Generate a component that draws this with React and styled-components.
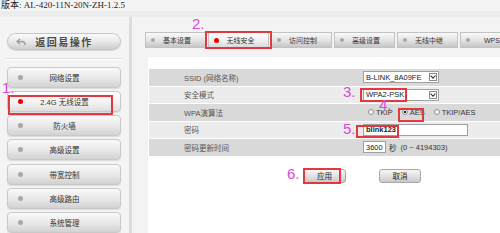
import React from 'react';
import styled, { createGlobalStyle, css } from 'styled-components';

const GlobalStyle = createGlobalStyle`
  html, body { margin: 0; padding: 0; background: #f0f0f0; }
  body { font-family: "Liberation Sans", "Noto Sans CJK SC", sans-serif; }
`;

const cjk = `"Liberation Sans", "Noto Sans CJK SC", sans-serif`;

const Page = styled.div`
  position: relative;
  width: 500px;
  height: 233px;
  overflow: hidden;
  background: #ececec;
  display: flex;
  flex-direction: column;
`;

const Header = styled.div`
  height: 11px;
  padding-left: 1px;
  background: #f4f4f4;
  font-family: "Liberation Serif", "Noto Sans CJK SC", serif;
  font-size: 9px;
  line-height: 11px;
  color: #222;
  white-space: nowrap;
`;

const Main = styled.div`
  margin-top: 6px;
  flex: 1;
  display: flex;
  min-height: 0;
`;

const Sidebar = styled.div`
  width: 122px;
  padding: 16px 0 0 7px;
  background: #f4f4f4;
  border-right: 3px solid #dcdcdc;
  display: flex;
  flex-direction: column;
`;

const BackButton = styled.div`
  width: 114px;
  height: 20px;
  box-sizing: border-box;
  border: 1px solid #c4c4c4;
  border-radius: 10px;
  background: linear-gradient(#fbfbfb, #e6e6e6 55%, #cdcdcd);
  display: flex;
  align-items: center;
  padding-left: 8px;
  box-shadow: 0 1px 1px rgba(0, 0, 0, 0.12);
`;

const BackLabel = styled.span`
  flex: 1;
  text-align: center;
  padding-right: 18px;
  font-family: ${cjk};
  font-size: 10px;
  font-weight: bold;
  letter-spacing: 1.5px;
  color: #4a4a4a;
`;

const Divider = styled.div`
  height: 1px;
  width: 116px;
  margin: 8px 0 7px -1px;
  background: #e0e0e0;
  border-bottom: 1px solid #fff;
`;

const Menu = styled.div`
  display: flex;
  flex-direction: column;
  gap: 3.2px;
`;

const MenuItem = styled.div`
  width: 114px;
  height: 21px;
  box-sizing: border-box;
  border: 1px solid #c9c9c9;
  border-radius: 4px;
  background: ${({ $active }) =>
    $active
      ? 'linear-gradient(#ffffff, #f1f1f1 60%, #dedede)'
      : 'linear-gradient(#fafafa, #e7e7e7 55%, #d2d2d2)'};
  display: flex;
  align-items: center;
  padding-left: 10px;
  box-shadow: 0 1px 1px rgba(0, 0, 0, 0.1);
`;

const Dot = styled.span`
  width: ${({ $size }) => $size || 5}px;
  height: ${({ $size }) => $size || 5}px;
  border-radius: 50%;
  flex-shrink: 0;
  background: ${({ $active }) => ($active ? '#f00000' : '#a8a8a8')};
`;

const ItemLabel = styled.span`
  flex: 1;
  text-align: center;
  padding-right: 14px;
  font-family: ${cjk};
  font-size: 7.5px;
  color: #333;
  white-space: nowrap;
`;

const Content = styled.div`
  flex: 1;
  display: flex;
  flex-direction: column;
  padding: 15px 0 0 13px;
  background: #f3f3f3;
  min-width: 0;
`;

const Tabs = styled.div`
  display: flex;
  gap: 2px;
  height: 16px;
`;

const Tab = styled.div`
  width: 61px;
  flex-shrink: 0;
  height: 16px;
  box-sizing: border-box;
  border: 1px solid #c2c2c2;
  background: ${({ $active }) =>
    $active
      ? 'linear-gradient(#ffffff, #eeeeee 60%, #d9d9d9)'
      : 'linear-gradient(#f9f9f9, #e2e2e2 55%, #c6c6c6)'};
  display: flex;
  align-items: center;
  padding-left: 5px;
`;

const TabLabel = styled.span`
  flex: 1;
  text-align: center;
  padding-right: 6px;
  font-family: ${cjk};
  font-size: 7px;
  color: #333;
  white-space: nowrap;
`;

const Panel = styled.div`
  flex: 1;
  margin: 9px 0 0 3px;
  padding: 12px 0 0 1px;
  background: #fff;
  display: flex;
  flex-direction: column;
`;

const Form = styled.div`
  display: flex;
  flex-direction: column;
`;

const Row = styled.div`
  height: 16.5px;
  border-bottom: 1px solid #fff;
  display: grid;
  grid-template-columns: 214px 1fr;
  align-items: center;
  background: ${({ $shade }) => ($shade ? '#d9d9d9' : '#ececec')};
`;

const Label = styled.div`
  padding-left: 35px;
  font-family: ${cjk};
  font-size: 7.5px;
  color: #555;
  white-space: nowrap;
`;

const Value = styled.div`
  display: flex;
  align-items: center;
  font-family: ${cjk};
  font-size: 7.5px;
  color: #333;
  white-space: nowrap;
`;

const field = css`
  height: 12px;
  box-sizing: border-box;
  border: 1px solid #a0a0a0;
  background: #fff;
  display: flex;
  align-items: center;
  padding-left: 2px;
  font-size: 7.5px;
  color: #222;
`;

const Select = styled.div`
  ${field}
  width: 76px;
  justify-content: space-between;
  padding-right: 1px;
`;

const Arrow = styled.span`
  width: 8px;
  height: 8px;
  box-sizing: border-box;
  border: 1px solid #8a8a8a;
  display: flex;
  align-items: center;
  justify-content: center;
`;

const Input = styled.div`
  ${field}
  width: ${({ $w }) => $w}px;
  font-weight: ${({ $bold }) => ($bold ? 'bold' : 'normal')};
`;

const Radio = styled.span`
  width: 6px;
  height: 6px;
  box-sizing: border-box;
  border-radius: 50%;
  border: 1px solid #8c8c8c;
  background: ${({ $on }) => ($on ? 'radial-gradient(#111 45%, #fff 55%)' : '#fff')};
  margin: 0 2px 0 ${({ $gap }) => $gap || 0}px;
`;

const Unit = styled.span`
  margin-left: ${({ $gap }) => $gap}px;
`;

const Actions = styled.div`
  display: flex;
  margin: 12px 0 0 154px;
  gap: 33px;
`;

const Button = styled.div`
  width: ${({ $w }) => $w}px;
  height: 14px;
  box-sizing: border-box;
  border: 1px solid #a8a8a8;
  border-radius: 3px;
  background: linear-gradient(#f7f7f7, #e0e0e0 55%, #c9c9c9);
  display: flex;
  align-items: center;
  justify-content: center;
  font-family: ${cjk};
  font-size: 7.5px;
  color: #222;
`;

const Note = styled.span`
  position: absolute;
  left: ${({ $x }) => $x}px;
  top: ${({ $y }) => $y}px;
  font-family: "Liberation Sans", sans-serif;
  font-size: 15px;
  line-height: 1;
  color: #d94ad9;
`;

const Mark = styled.span`
  position: absolute;
  left: ${({ $x }) => $x}px;
  top: ${({ $y }) => $y}px;
  width: ${({ $w }) => $w}px;
  height: ${({ $h }) => $h}px;
  box-sizing: border-box;
  border: 2px solid #e0393f;
  pointer-events: none;
`;

const BackIcon = () => (
  <svg width="10" height="8" viewBox="0 0 10 8" fill="none">
    <path d="M4 1 L1 3.5 L4 6" stroke="#9a9a9a" strokeWidth="1.4" strokeLinejoin="round" />
    <path d="M1.5 3.5 H6 Q9 3.5 9 7" stroke="#9a9a9a" strokeWidth="1.4" fill="none" />
  </svg>
);

const Chevron = () => (
  <svg width="6" height="4" viewBox="0 0 6 4">
    <path d="M0.5 0.5 L3 3.2 L5.5 0.5" stroke="#333" strokeWidth="1.1" fill="none" />
  </svg>
);

const menu = ['网络设置', '2.4G 无线设置', '防火墙', '高级设置', '带宽控制', '高级路由', '系统管理'];
const tabs = ['基本设置', '无线安全', '访问控制', '高级设置', '无线中继', 'WPS'];

export default function App() {
  return (
    <Page>
      <GlobalStyle />
      <Header>版本: AL-420-11N-20N-ZH-1.2.5</Header>
      <Main>
        <Sidebar>
          <BackButton>
            <BackIcon />
            <BackLabel>返回易操作</BackLabel>
          </BackButton>
          <Divider />
          <Menu>
            {menu.map((m, i) => (
              <MenuItem key={m} $active={i === 1}>
                <Dot $active={i === 1} />
                <ItemLabel>{m}</ItemLabel>
              </MenuItem>
            ))}
          </Menu>
        </Sidebar>
        <Content>
          <Tabs>
            {tabs.map((t, i) => (
              <Tab key={t} $active={i === 1}>
                <Dot $active={i === 1} $size={i === 1 ? 5 : 4} />
                <TabLabel>{t}</TabLabel>
              </Tab>
            ))}
          </Tabs>
          <Panel>
            <Form>
              <Row $shade>
                <Label>SSID (网络名称)</Label>
                <Value>
                  <Select>
                    B-LINK_8A09FE
                    <Arrow><Chevron /></Arrow>
                  </Select>
                </Value>
              </Row>
              <Row>
                <Label>安全模式</Label>
                <Value>
                  <Select>
                    WPA2-PSK
                    <Arrow><Chevron /></Arrow>
                  </Select>
                </Value>
              </Row>
              <Row $shade>
                <Label>WPA演算法</Label>
                <Value>
                  <Radio $gap={5} />TKIP
                  <Radio $gap={9} $on />AES
                  <Radio $gap={9} />TKIP/AES
                </Value>
              </Row>
              <Row>
                <Label>密码</Label>
                <Value>
                  <Input $w={105} $bold>blink123</Input>
                </Value>
              </Row>
              <Row $shade>
                <Label>密码更新时间</Label>
                <Value>
                  <Input $w={23}>3600</Input>
                  <Unit $gap={3}>秒</Unit>
                  <Unit $gap={4}>(0 ~ 4194303)</Unit>
                </Value>
              </Row>
            </Form>
            <Actions>
              <Button $w={43}>应用</Button>
              <Button $w={42}>取消</Button>
            </Actions>
          </Panel>
        </Content>
      </Main>

      <Mark $x={8} $y={95} $w={105} $h={20} />
      <Mark $x={205} $y={31} $w={67} $h={18} />
      <Mark $x={360} $y={88} $w={47} $h={14} />
      <Mark $x={398} $y={108} $w={26} $h={14} />
      <Mark $x={356} $y={125} $w={43} $h={13} />
      <Mark $x={303} $y={168} $w={38} $h={16} />

      <Note $x={2} $y={80}>1.</Note>
      <Note $x={192} $y={16}>2.</Note>
      <Note $x={343} $y={84}>3.</Note>
      <Note $x={379} $y={97}>4.</Note>
      <Note $x={343} $y={121}>5.</Note>
      <Note $x={287} $y={166}>6.</Note>
    </Page>
  );
}
